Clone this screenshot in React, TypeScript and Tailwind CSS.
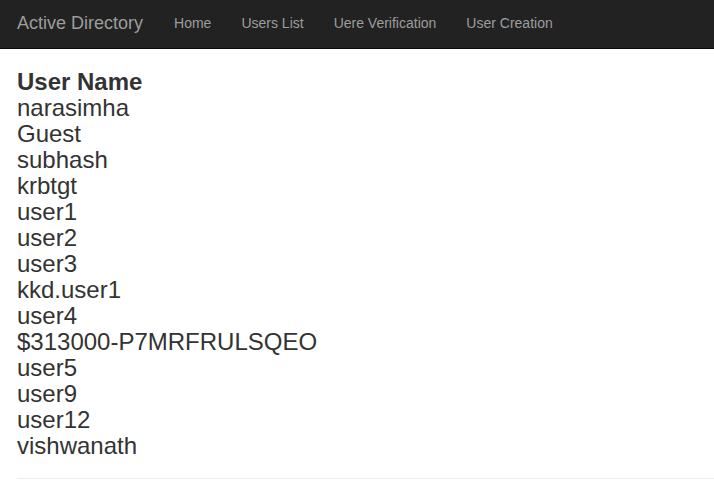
const users = [
  'narasimha',
  'Guest',
  'subhash',
  'krbtgt',
  'user1',
  'user2',
  'user3',
  'kkd.user1',
  'user4',
  '$313000-P7MRFRULSQEO',
  'user5',
  'user9',
  'user12',
  'vishwanath',
];

const links = ['Home', 'Users List', 'Uere Verification', 'User Creation'];

export default function App() {
  return (
    <div className="min-h-screen bg-white" style={{ fontFamily: '"Liberation Sans", Arial, sans-serif' }}>
      {/* Navbar */}
      <nav className="flex items-center h-[49px] bg-[#222222] border-b border-[#080808]">
        <a className="pl-[17px] pr-[16px] text-[18px] leading-[20px] text-[#9d9d9d] -mt-[2px]">Active Directory</a>
        <ul className="flex items-center">
          {links.map((l) => (
            <li key={l}>
              <a className="block px-[15px] text-[14px] leading-[20px] text-[#9d9d9d] -mt-[2px]">{l}</a>
            </li>
          ))}
        </ul>
      </nav>

      {/* User list */}
      <div className="pt-[20px] px-[17px] text-[24px] leading-[26px] text-[#333333]">
        <div className="font-bold">User Name</div>
        {users.map((u) => (
          <div key={u}>{u}</div>
        ))}
      </div>

      <hr className="mt-[19px] ml-[17px] border-t border-[#eeeeee]" />
    </div>
  );
}
